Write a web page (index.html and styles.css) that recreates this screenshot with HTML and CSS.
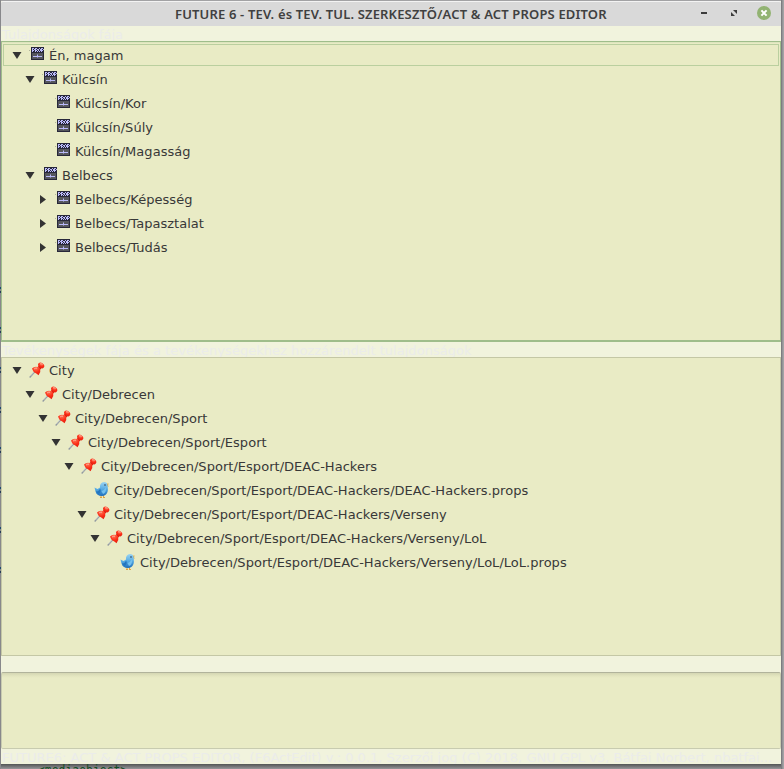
FILE: index.html
```
<!DOCTYPE html>
<html lang="hu">
<head>
<meta charset="utf-8">
<title>FUTURE 6</title>
<link rel="stylesheet" href="styles.css">
</head>
<body>
<svg width="0" height="0" class="defs">
  <defs>
    <radialGradient id="red" cx=".4" cy=".3" r=".8"><stop offset="0" stop-color="#ff7a58"/><stop offset=".5" stop-color="#fb2e18"/><stop offset="1" stop-color="#e01808"/></radialGradient>
    <linearGradient id="blue" x1="0" y1="0" x2="0" y2="1"><stop offset="0" stop-color="#9ad4f2"/><stop offset=".5" stop-color="#58ace4"/><stop offset="1" stop-color="#1d6dbb"/></linearGradient>
    <symbol id="prop" viewBox="0 0 16 16">
      <path d="M0 5l1-1" stroke="#b0b49b" fill="none"/>
      <rect x="2" y="1" width="13" height="13" fill="#28283a"/>
      <rect x="3" y="7" width="11" height="6" fill="#55565c"/>
      <path d="M3 2h2v1H3zM6 2h2v1H6zM10 2h1v1h-1zM12 2h2v1h-2zM3 3h1v3H3zM5 3h1v1H5zM6 3h1v3H6zM8 3h1v1H8zM9 3h1v2H9zM11 3h1v2h-1zM12 3h1v3h-1zM14 3h1v1h-1zM4 4h1v1H4zM7 4h1v1H7zM13 4h1v1h-1zM8 5h1v1H8zM10 5h1v1h-1z" fill="#b9b9fa" shape-rendering="crispEdges"/>
      <path d="M4 10.500h9M8.500 8.500v3" stroke="#b9b9fa" fill="none"/>
    </symbol>
    <symbol id="pin" viewBox="0 0 16 16">
      <path d="M.7 15.500L6 9.500" stroke="#929aa0" stroke-width="1.300"/>
      <path d="M1.500 14L5 10" stroke="#d8dcd8" stroke-width=".6"/>
      <path d="M3 6.500Q5 4.300 8.500 5L10.500 3 13 5.500 11.200 7.800Q12.200 10.500 9.500 13.300 8 12 6.500 11 4.500 10.500 3 6.500z" fill="url(#red)"/>
      <ellipse cx="12.200" cy="3.400" rx="3.300" ry="2.500" transform="rotate(38 12.200 3.400)" fill="url(#red)"/>
      <path d="M9.500 4.500l2.500 2.300" stroke="#c91e12" stroke-width=".7"/>
      <path d="M5 7q1.500-1 3-.8M11 1.800q1.500-.4 2.500.7" stroke="#ffb09c" fill="none" stroke-width=".9"/>
    </symbol>
    <symbol id="bird" viewBox="0 0 16 16">
      <path d="M7 13v2.500M9.500 13v2.500M6 15.500h2M9 15.500h2" stroke="#e2a340" fill="none"/>
      <path d="M12.500 1.500l2.500.2-1.200 1.300 1.200 1.500-2.500-.2z" fill="#e8a832"/>
      <path d="M.5 5.500L3.500 7 6 5.500Q5.500.5 10 0q3.500.2 3.700 4 .5 4-.2 6Q12 14 8 14 2.500 13.800 1.500 9.500z" fill="url(#blue)"/>
      <path d="M2 9q2 1.500 4.200-2.500 1.500 4-1.500 5.500Q2.500 11.500 2 9z" fill="#2476bf"/>
      <path d="M7.500 9q3-1 4.800-4-.1 6-3.300 7z" fill="#74c0ee"/>
      <circle cx="11" cy="3" r=".8" fill="#263d57"/>
    </symbol>
  </defs>
</svg>
<div class="desktop">
  <pre class="code">&lt;mediaobject&gt;</pre>
  <div class="specks"></div>
</div>
<main class="window">
  <header class="titlebar">
    <h1>FUTURE 6 - TEV. és TEV. TUL. SZERKESZTŐ/ACT &amp; ACT PROPS EDITOR</h1>
    <svg class="controls" width="76" height="16" viewBox="0 0 76 16">
      <path d="M0 7h6v2H0z" fill="#3c3c3c"/>
      <path d="M32 5h4v4zM30 7v4h4z" fill="#3c3c3c"/>
      <circle cx="63" cy="8" r="7" fill="#92b372"/>
      <path d="M60.400 5.400l5.200 5.200m0-5.200l-5.200 5.200" stroke="#fff" stroke-width="2"/>
    </svg>
  </header>
  <div class="label">Tulajdonságok fája</div>
  <section class="tree focused">
    <div class="row d0 selected"><i class="open"></i><svg><use href="#prop"/></svg>Én, magam</div>
    <div class="row d1"><i class="open"></i><svg><use href="#prop"/></svg>Külcsín</div>
    <div class="row d2"><i></i><svg><use href="#prop"/></svg>Külcsín/Kor</div>
    <div class="row d2"><i></i><svg><use href="#prop"/></svg>Külcsín/Súly</div>
    <div class="row d2"><i></i><svg><use href="#prop"/></svg>Külcsín/Magasság</div>
    <div class="row d1"><i class="open"></i><svg><use href="#prop"/></svg>Belbecs</div>
    <div class="row d2"><i class="closed"></i><svg><use href="#prop"/></svg>Belbecs/Képesség</div>
    <div class="row d2"><i class="closed"></i><svg><use href="#prop"/></svg>Belbecs/Tapasztalat</div>
    <div class="row d2"><i class="closed"></i><svg><use href="#prop"/></svg>Belbecs/Tudás</div>
  </section>
  <div class="label">Tevékenységek fája és a tevékenységekhez hozzárendelt tulajdonságok</div>
  <section class="tree second">
    <div class="row d0"><i class="open"></i><svg><use href="#pin"/></svg>City</div>
    <div class="row d1"><i class="open"></i><svg><use href="#pin"/></svg>City/Debrecen</div>
    <div class="row d2"><i class="open"></i><svg><use href="#pin"/></svg>City/Debrecen/Sport</div>
    <div class="row d3"><i class="open"></i><svg><use href="#pin"/></svg>City/Debrecen/Sport/Esport</div>
    <div class="row d4"><i class="open"></i><svg><use href="#pin"/></svg>City/Debrecen/Sport/Esport/DEAC-Hackers</div>
    <div class="row d5"><i></i><svg><use href="#bird"/></svg>City/Debrecen/Sport/Esport/DEAC-Hackers/DEAC-Hackers.props</div>
    <div class="row d5"><i class="open"></i><svg><use href="#pin"/></svg>City/Debrecen/Sport/Esport/DEAC-Hackers/Verseny</div>
    <div class="row d6"><i class="open"></i><svg><use href="#pin"/></svg>City/Debrecen/Sport/Esport/DEAC-Hackers/Verseny/LoL</div>
    <div class="row d7"><i></i><svg><use href="#bird"/></svg>City/Debrecen/Sport/Esport/DEAC-Hackers/Verseny/LoL/LoL.props</div>
  </section>
  <div class="gap"></div>
  <section class="textarea"></section>
  <footer class="label status">FUTURE6: ACT &amp; ACT PROPS EDITOR, (F6ActEdit) v.: 0.0.1, Szerzői jog (C) 2018, GNU GPL v3, Bátfai Norbert, nbatfai...</footer>
</main>
</body>
</html>
```
FILE: styles.css
```
* { box-sizing: border-box; }
body {
  margin: 0;
  width: 784px;
  height: 769px;
  overflow: hidden;
  position: relative;
  background: #a2a2a4;
  font: 13px/24px "DejaVu Sans", sans-serif;
  letter-spacing: .03px;
  color: #383838;
}
.defs { position: absolute; }
.desktop {
  position: absolute;
  inset: 0;
  overflow: hidden;
  background: linear-gradient(90deg, #88888b 0 1px, transparent 1px 781px, #6c6c70 781px, #8d8d90 782px, #aaaaac 784px), linear-gradient(180deg, #a2a2a4 0 764px, #525554 764px, #7b7b7e 767px, #98989b 769px);
}
.code {
  position: absolute;
  left: 38px;
  top: 763px;
  margin: 0;
  font: 11.4px/14px "DejaVu Sans Mono", monospace;
  letter-spacing: 0;
  color: #164d26;
}
.specks {
  position: absolute;
  left: 0;
  top: 265px;
  width: 1px;
  height: 335px;
  background: repeating-linear-gradient(180deg, #88888b 0 22px, #1d4a70 22px 24px, #88888b 24px 26px, #263e58 26px 28px, #88888b 28px 40px);
}
.window {
  position: relative;
  margin: 1px 0 0 1px;
  width: 780px;
  height: 763px;
  background: #f1f3dd;
  display: flex;
  flex-direction: column;
}
.titlebar {
  height: 25px;
  flex: none;
  background: #d9d9d9;
  border-top: 1px solid #f3f3f3;
  border-radius: 2px 2px 0 0;
  display: flex;
  align-items: center;
  padding-left: 174px;
}
.titlebar h1 {
  margin: 0;
  width: 526px;
  font: 600 13px/24px "Noto Sans", sans-serif;
  letter-spacing: .16px;
  color: #404040;
  white-space: nowrap;
}
.controls { flex: none; margin-bottom: 2px; }
.label {
  height: 15px;
  flex: none;
  padding-left: 1px;
  line-height: 17px;
  color: #ebecea;
  white-space: nowrap;
  overflow: hidden;
}
.tree {
  height: 301px;
  flex: none;
  background: #e9ebc5;
  border: 1px solid #c4c7a5;
  padding-top: 2px;
}
.focused { border: 1px solid #9fbd8b; border-bottom-width: 2px; box-shadow: inset 0 1px #dce5bd; }
.second { height: 299px; padding-top: 1px; }
.row {
  height: 24px;
  display: flex;
  align-items: center;
  padding-left: 9px;
  white-space: nowrap;
  position: relative;
}
.row i { width: 12px; height: 12px; margin: -2px 6px 0 0; flex: none; }
.row i.open::before {
  content: "";
  display: block;
  margin: 3px 0 0 1px;
  width: 10px;
  height: 7px;
  background: #333;
  clip-path: polygon(5% 0, 95% 0, 50% 100%);
}
.row i.closed::before {
  content: "";
  display: block;
  margin: 2px 0 0 3px;
  width: 6px;
  height: 9px;
  background: #333;
  clip-path: polygon(0 0, 100% 50%, 0 100%);
}
.row svg { width: 16px; height: 16px; flex: none; margin: -2px 4px 0 0; }
.d1 { padding-left: 22px; }
.d2 { padding-left: 35px; }
.d3 { padding-left: 48px; }
.d4 { padding-left: 61px; }
.d5 { padding-left: 74px; }
.d6 { padding-left: 87px; }
.d7 { padding-left: 100px; }
.focused svg { margin-top: -5px; }
.selected::after {
  content: "";
  position: absolute;
  inset: 0 1px 2px;
  border: 1px solid #bacf9f;
}
.gap { height: 16px; flex: none; }
.textarea {
  height: 77px;
  flex: none;
  background: linear-gradient(#d4d6b3, #e3e5bf 3px, #e9ebc5 5px);
  border: 1px solid #c8cbb0;
  border-top-color: #b1b39b;
  border-radius: 2px;
}
.status { height: 15px; letter-spacing: .01px; }
```
